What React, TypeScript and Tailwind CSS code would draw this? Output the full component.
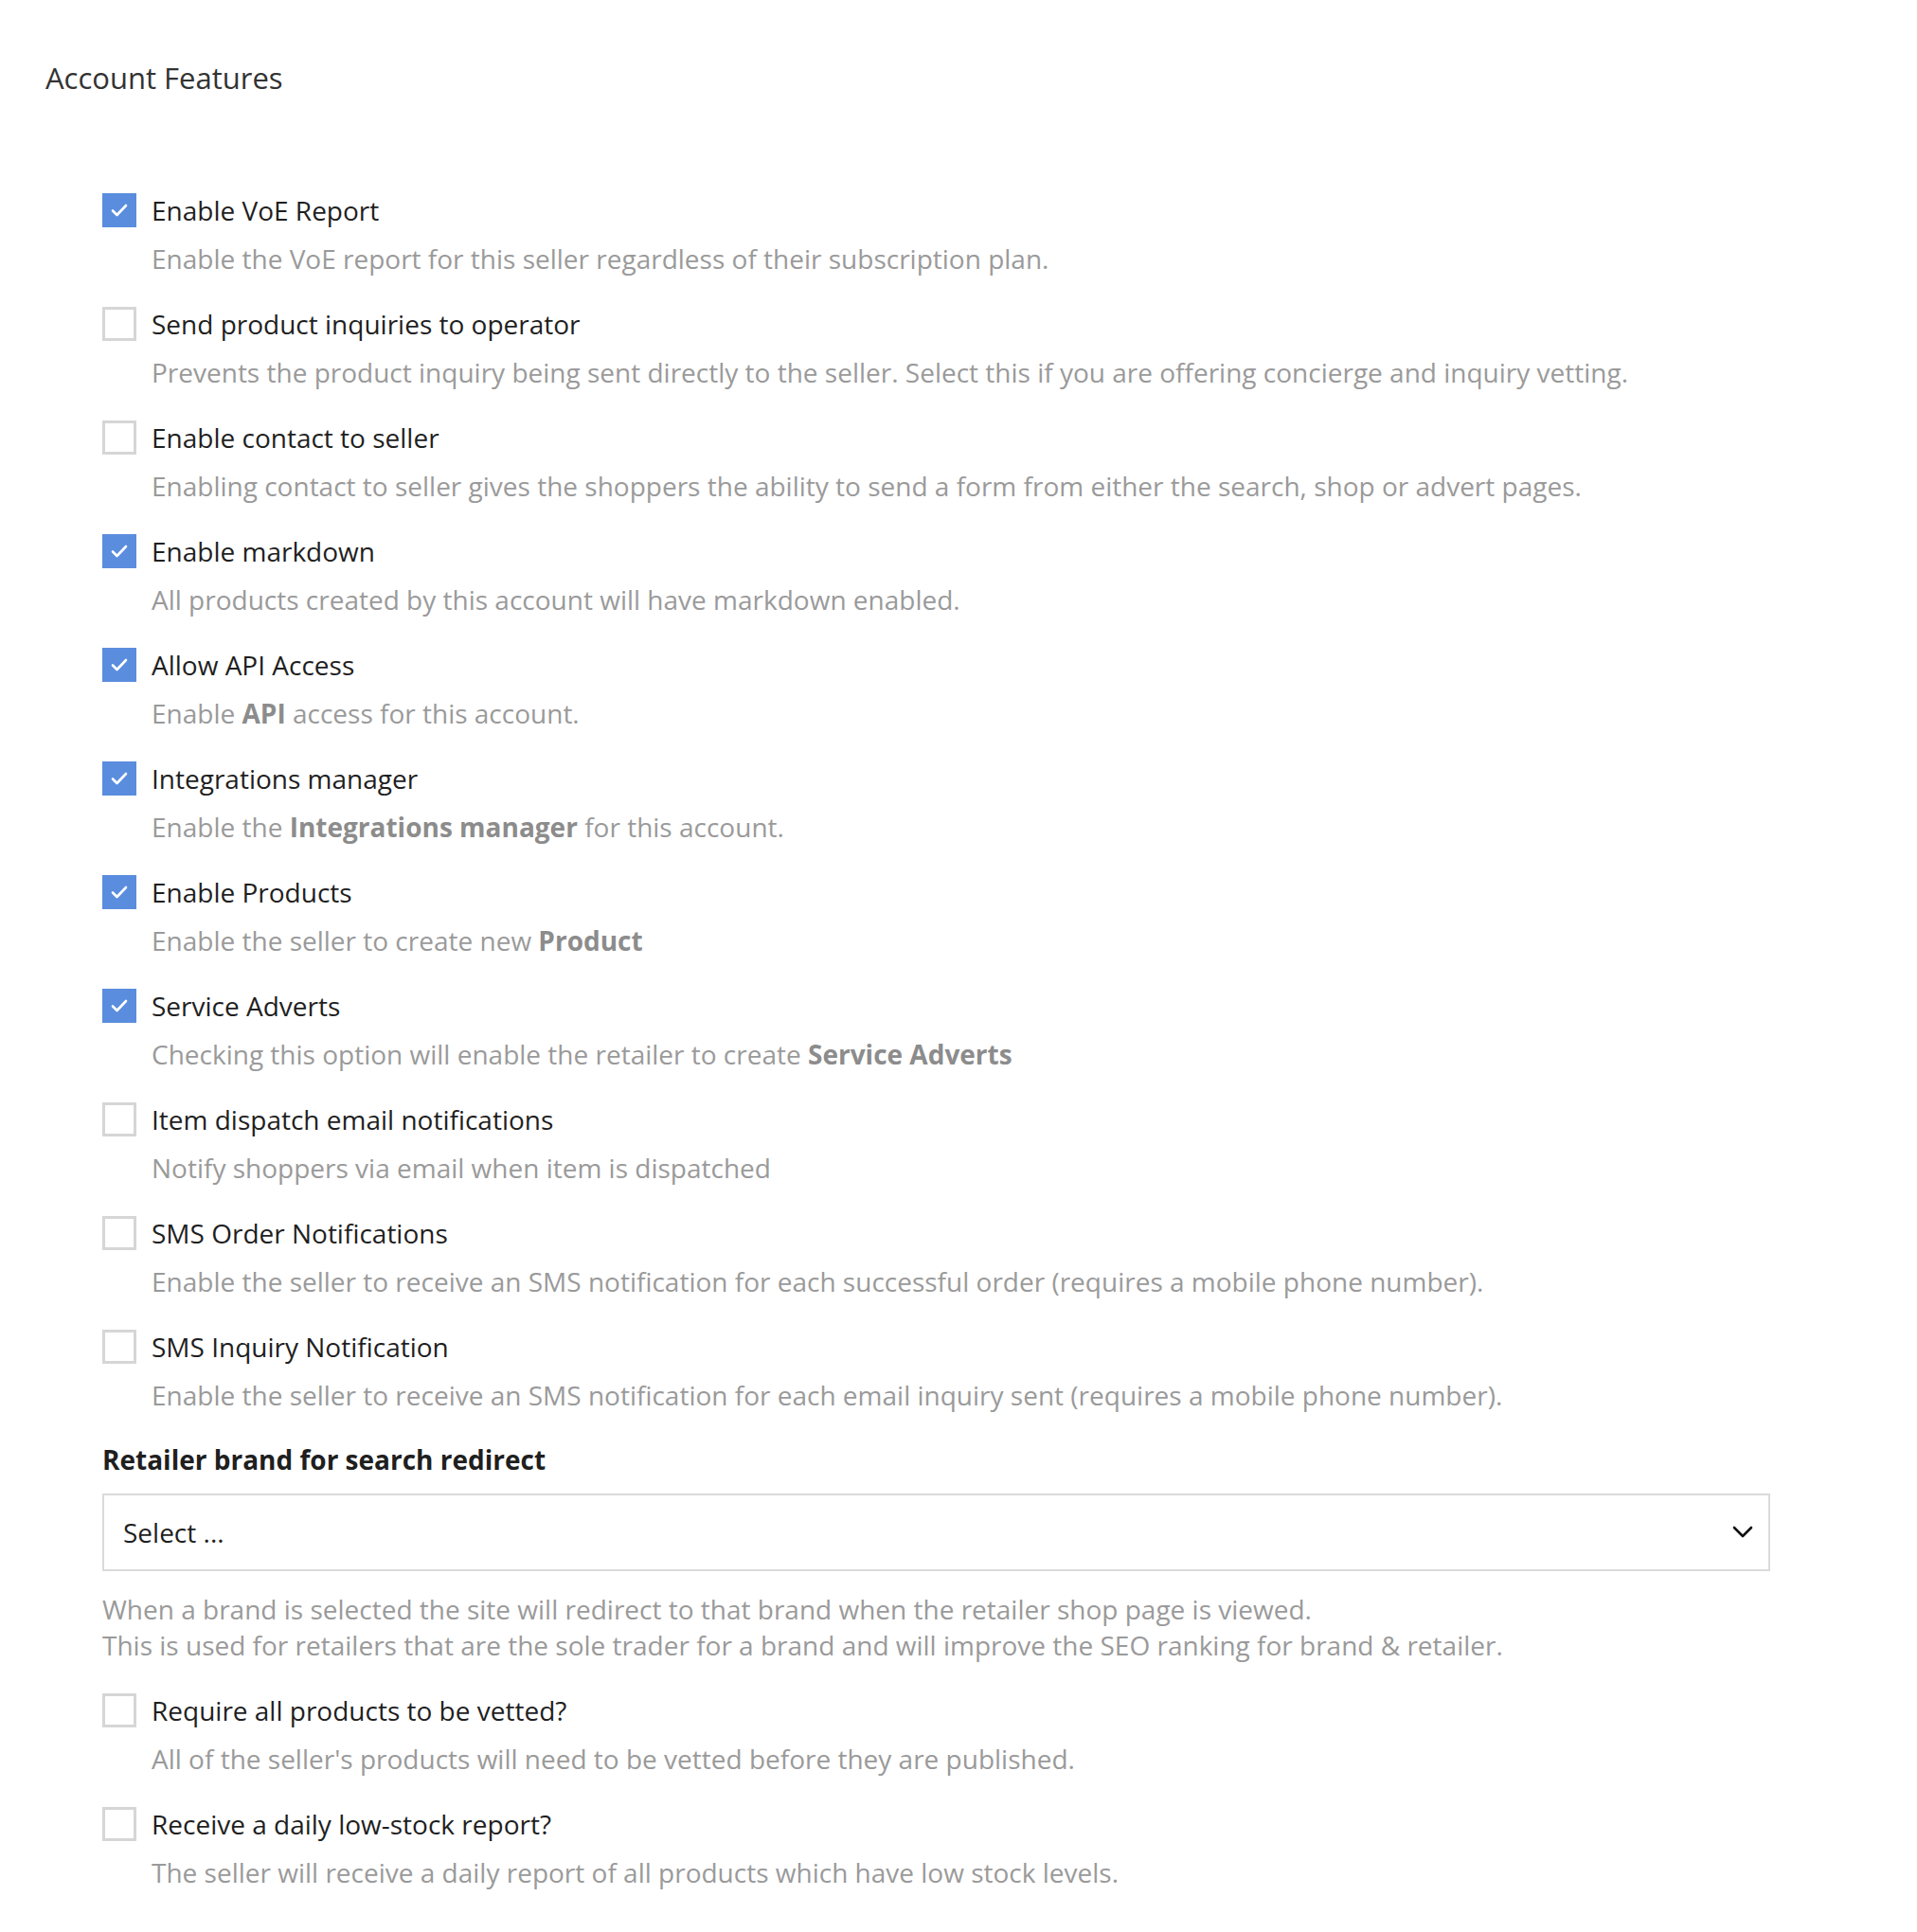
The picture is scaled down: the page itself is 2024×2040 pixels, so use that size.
import { ReactNode } from "react";

type Feature = {
  label: string;
  checked: boolean;
  description: ReactNode;
};

const features: Feature[] = [
  {
    label: "Enable VoE Report",
    checked: true,
    description: "Enable the VoE report for this seller regardless of their subscription plan."
  },
  {
    label: "Send product inquiries to operator",
    checked: false,
    description:
      "Prevents the product inquiry being sent directly to the seller. Select this if you are offering concierge and inquiry vetting."
  },
  {
    label: "Enable contact to seller",
    checked: false,
    description:
      "Enabling contact to seller gives the shoppers the ability to send a form from either the search, shop or advert pages."
  },
  {
    label: "Enable markdown",
    checked: true,
    description: "All products created by this account will have markdown enabled."
  },
  {
    label: "Allow API Access",
    checked: true,
    description: (
      <>
        Enable <b className="font-bold text-[#8c8c8c]">API</b> access for this account.
      </>
    )
  },
  {
    label: "Integrations manager",
    checked: true,
    description: (
      <>
        Enable the <b className="font-bold text-[#8c8c8c]">Integrations manager</b> for this account.
      </>
    )
  },
  {
    label: "Enable Products",
    checked: true,
    description: (
      <>
        Enable the seller to create new <b className="font-bold text-[#8c8c8c]">Product</b>
      </>
    )
  },
  {
    label: "Service Adverts",
    checked: true,
    description: (
      <>
        Checking this option will enable the retailer to create{" "}
        <b className="font-bold text-[#8c8c8c]">Service Adverts</b>
      </>
    )
  },
  {
    label: "Item dispatch email notifications",
    checked: false,
    description: "Notify shoppers via email when item is dispatched"
  },
  {
    label: "SMS Order Notifications",
    checked: false,
    description:
      "Enable the seller to receive an SMS notification for each successful order (requires a mobile phone number)."
  },
  {
    label: "SMS Inquiry Notification",
    checked: false,
    description:
      "Enable the seller to receive an SMS notification for each email inquiry sent (requires a mobile phone number)."
  }
];

const extraFeatures: Feature[] = [
  {
    label: "Require all products to be vetted?",
    checked: false,
    description: "All of the seller's products will need to be vetted before they are published."
  },
  {
    label: "Receive a daily low-stock report?",
    checked: false,
    description: "The seller will receive a daily report of all products which have low stock levels."
  }
];

function Checkbox({ checked }: { checked: boolean }) {
  if (checked) {
    return (
      <span className="flex h-[36px] w-[36px] shrink-0 items-center justify-center bg-[#5a8dde]">
        <svg width="18" height="14" viewBox="0 0 18 14" fill="none">
          <path d="M2 7.5 L6.5 12 L16 2" stroke="white" strokeWidth="2.6" strokeLinecap="round" strokeLinejoin="round" />
        </svg>
      </span>
    );
  }
  return <span className="h-[36px] w-[36px] shrink-0 border-[3px] border-[#d6d6d6] bg-white" />;
}

function FeatureItem({ feature }: { feature: Feature }) {
  return (
    <div className="pb-[32px]">
      <label className="flex items-center gap-[16px]">
        <Checkbox checked={feature.checked} />
        <span className="text-[28px] leading-[36px] text-[#1f1f1f]">{feature.label}</span>
      </label>
      <p className="mt-[14px] pl-[52px] text-[28px] leading-[38px] text-[#9a9a9a]">{feature.description}</p>
    </div>
  );
}

export default function App() {
  return (
    <div className="min-h-screen bg-white font-['Open_Sans',sans-serif]">
      <h1 className="pl-[48px] pt-[58px] text-[31px] leading-[48px] font-normal text-[#333]">Account Features</h1>

      <div className="pl-[108px] pt-[98px]">
        {features.map((feature) => (
          <FeatureItem key={feature.label} feature={feature} />
        ))}

        <div className="-mt-[2px] w-[1761px]">
          <p className="text-[28px] leading-[38px] font-bold text-[#1f1f1f]">Retailer brand for search redirect</p>
          <div className="mt-[17px] flex h-[82px] items-center justify-between border-2 border-[#dadada] pr-[16px] pl-[20px]">
            <span className="text-[28px] text-[#1f1f1f]">Select ...</span>
            <svg width="22" height="14" viewBox="0 0 22 14" fill="none">
              <path d="M2 2 L11 11 L20 2" stroke="#111" strokeWidth="2.6" strokeLinecap="round" strokeLinejoin="round" />
            </svg>
          </div>
          <p className="mt-[21px] text-[28px] leading-[38px] text-[#9a9a9a]">
            When a brand is selected the site will redirect to that brand when the retailer shop page is viewed.
            <br />
            This is used for retailers that are the sole trader for a brand and will improve the SEO ranking for brand &amp; retailer.
          </p>
        </div>

        <div className="pt-[32px]">
          {extraFeatures.map((feature) => (
            <FeatureItem key={feature.label} feature={feature} />
          ))}
        </div>
      </div>
    </div>
  );
}
